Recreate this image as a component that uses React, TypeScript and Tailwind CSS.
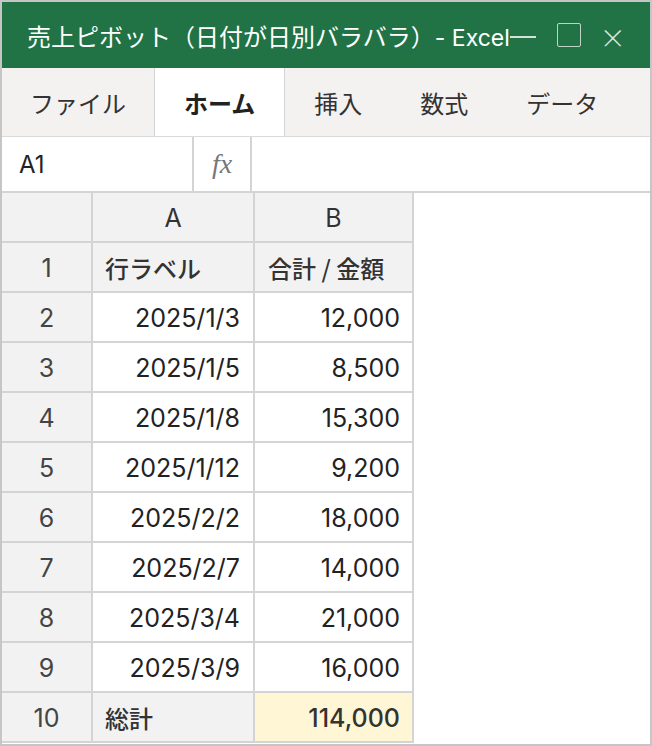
const rows: [string, string, string][] = [
  ["2", "2025/1/3", "12,000"],
  ["3", "2025/1/5", "8,500"],
  ["4", "2025/1/8", "15,300"],
  ["5", "2025/1/12", "9,200"],
  ["6", "2025/2/2", "18,000"],
  ["7", "2025/2/7", "14,000"],
  ["8", "2025/3/4", "21,000"],
  ["9", "2025/3/9", "16,000"],
]

const tabs = ["ファイル", "ホーム", "挿入", "数式", "データ"]

// latin text in the sheet uses a wider face than the CJK one
const num = "font-['Inter',sans-serif] text-[25px] pt-[4px]"
const jp = "pt-[2px]"

export default function App() {
  return (
    <div className="w-[652px] h-[746px] overflow-hidden border-2 border-[#c6c6c6] bg-white flex flex-col font-['Noto_Sans_CJK_JP',sans-serif]">
      {/* title bar */}
      <div className="h-[66px] shrink-0 bg-[#217346] flex items-center pl-[25px] pt-[3px] text-white">
        <span className="text-[24px] whitespace-nowrap">
          売上ピボット（日付が日別バラバラ）<span className="font-['Inter',sans-serif] text-[23px]">- Excel</span>
        </span>
        <div className="w-[26px] h-[2px] bg-white/80 shrink-0" />
        <div className="w-[24px] h-[24px] shrink-0 ml-[21px] -mt-[4px] border border-white/70 rounded-[2px]" />
        <span className="ml-[19px] text-[26px] leading-none text-white/85 font-light">×</span>
      </div>

      {/* ribbon tabs */}
      <div className="h-[69px] shrink-0 bg-[#f3f2f1] border-b border-[#dadada] flex">
        {tabs.map((t, i) => (
          <div
            key={t}
            className={
              t === "ホーム"
                ? "px-[29px] pt-[2px] flex items-center bg-white border-x border-[#d4d4d4] text-[24px] font-bold text-[#222]"
                : i === 0
                  ? "px-[28px] pt-[2px] flex items-center text-[24px] text-[#333]"
                  : "px-[29px] pt-[2px] flex items-center text-[24px] text-[#333]"
            }
          >
            {t}
          </div>
        ))}
      </div>

      {/* formula bar */}
      <div className="h-[56px] shrink-0 flex border-b-2 border-[#d4d4d4]">
        <div className="w-[192px] border-r-2 border-[#d4d4d4] flex items-center pl-[17px] pt-[2px] font-['Inter',sans-serif] text-[24px] text-[#222]">
          A1
        </div>
        <div className="w-[58px] border-r-2 border-[#d4d4d4] flex items-center justify-center text-[28px] italic text-[#777] font-['Liberation_Serif',serif]">
          fx
        </div>
        <div className="flex-1" />
      </div>

      {/* sheet */}
      <div className="flex">
        <div className="grid grid-cols-[89px_160px_157px] auto-rows-[48px] gap-[2px] bg-[#d4d4d4] border-r-2 border-b-2 border-[#d4d4d4] text-[24px] text-[#222]">
          <div className="bg-[#f2f2f2]" />
          <div className={`bg-[#f2f2f2] flex items-center justify-center text-[#333] ${num}`}>A</div>
          <div className={`bg-[#f2f2f2] flex items-center justify-center text-[#333] ${num}`}>B</div>

          <div className={`bg-[#f2f2f2] flex items-center justify-center text-[#444] ${num}`}>1</div>
          <div className={`bg-[#f2f2f2] flex items-center pl-[12px] font-medium text-[#333] ${jp}`}>行ラベル</div>
          <div className={`bg-[#f2f2f2] flex items-center pl-[13px] font-medium text-[#333] whitespace-nowrap ${jp}`}>
            合計&nbsp;/&nbsp;金額
          </div>

          {rows.map(([n, d, v]) => (
            <div key={n} className="contents">
              <div className={`bg-[#f2f2f2] flex items-center justify-center text-[#444] ${num}`}>{n}</div>
              <div className={`bg-white flex items-center justify-end pr-[13px] ${num}`}>{d}</div>
              <div className={`bg-white flex items-center justify-end pr-[12px] ${num}`}>{v}</div>
            </div>
          ))}

          <div className={`bg-[#f2f2f2] flex items-center justify-center text-[#444] ${num}`}>10</div>
          <div className={`bg-[#f2f2f2] flex items-center pl-[12px] font-medium text-[#333] ${jp}`}>総計</div>
          <div className={`bg-[#fff6d5] flex items-center justify-end pr-[12px] font-medium text-[#333] ${num}`}>114,000</div>
        </div>
        <div className="flex-1" />
      </div>
    </div>
  )
}
